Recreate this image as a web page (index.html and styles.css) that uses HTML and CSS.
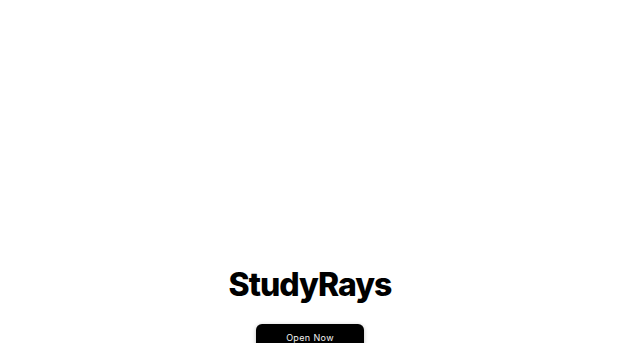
FILE: index.html
```html
<!DOCTYPE html>
<html lang="en">
<head>
    <meta charset="UTF-8">
    <meta name="viewport" content="width=device-width, initial-scale=1.0">
    <title>StudyRays</title>
    <link rel="stylesheet" href="styles.css">
</head>
<body>
    <main class="hero">
        <h1 class="brand">StudyRays</h1>
        <a class="open-btn" href="#">Open Now</a>
    </main>
</body>
</html>
```

FILE: styles.css
```css
body {
    margin: 0;
    font-family: Inter, "Liberation Sans", sans-serif;
    background: #fff;
    color: #000;
}
.hero {
    display: flex;
    flex-direction: column;
    align-items: center;
    padding-top: 264px;
}
.brand {
    margin: 0;
    font-size: 32px;
    font-weight: 800;
    letter-spacing: -0.03em;
    line-height: 42px;
}
.open-btn {
    margin-top: 18px;
    display: block;
    width: 108px;
    height: 40px;
    box-sizing: border-box;
    padding-top: 8px;
    text-align: center;
    background: #000;
    color: #f2f2f2;
    font-size: 9px;
    letter-spacing: 0.04em;
    text-decoration: none;
    border-radius: 6px;
    box-shadow: 0 1px 4px rgba(0, 0, 0, 0.25);
}
```
